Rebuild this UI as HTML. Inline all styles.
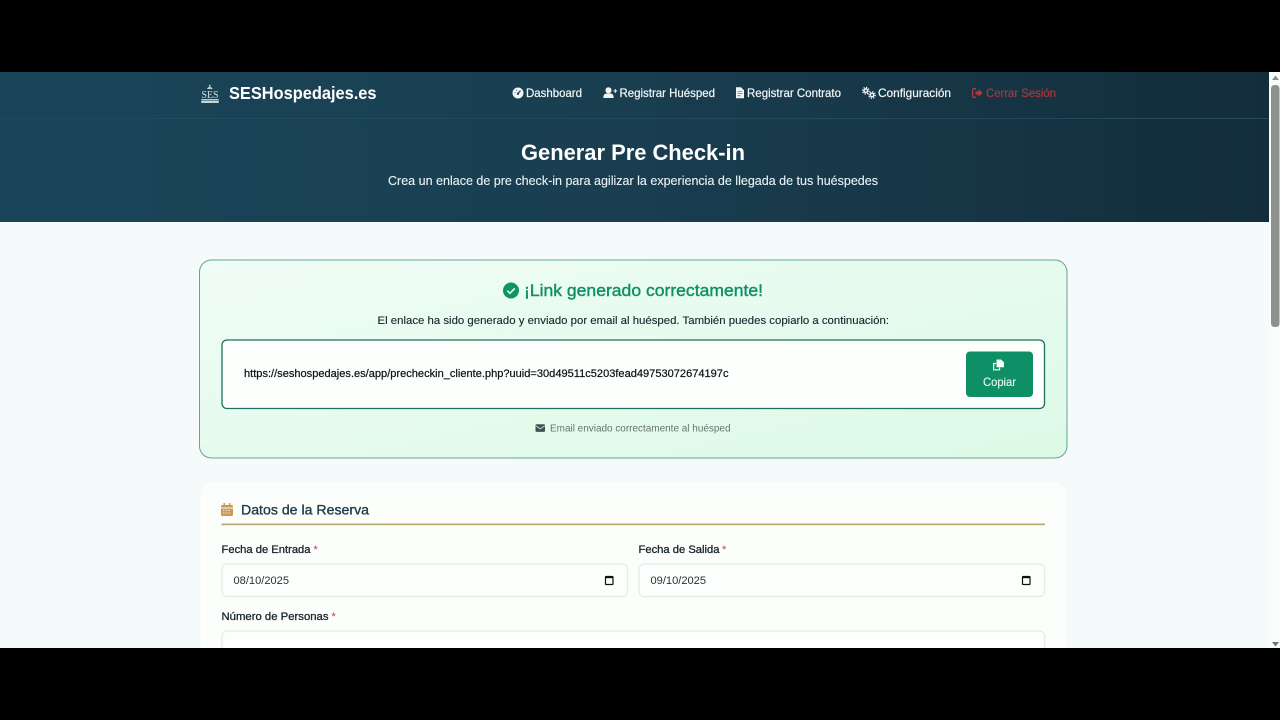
<!DOCTYPE html>
<html lang="es">
<head>
<meta charset="utf-8">
<title>Generar Pre Check-in</title>
<style>
html,body{margin:0;padding:0;width:1280px;height:720px;overflow:hidden;background:#000}
svg{display:block;position:absolute;left:0;top:0}
text{font-family:"Liberation Sans",Arial,sans-serif}
.m{stroke-width:.22px;paint-order:stroke}
</style>
</head>
<body>
<svg width="1280" height="720" viewBox="0 0 1280 720" xmlns="http://www.w3.org/2000/svg">
<defs>
<linearGradient id="hero" x1="0" y1="0" x2="1" y2="0">
<stop offset="0" stop-color="#1a4559"/>
<stop offset=".5" stop-color="#193e50"/>
<stop offset="1" stop-color="#132d3b"/>
</linearGradient>
<linearGradient id="alert" x1="0" y1="0" x2="1" y2="1">
<stop offset="0" stop-color="#f0fcf6"/>
<stop offset="1" stop-color="#dcfae6"/>
</linearGradient>
<clipPath id="page"><rect x="0" y="72" width="1280" height="576"/></clipPath>
</defs>

<rect width="1280" height="720" fill="#000"/>
<g clip-path="url(#page)">
<rect x="0" y="72" width="1269" height="576" fill="#f5fbfb"/>
<rect x="0" y="72" width="1269" height="150" fill="url(#hero)"/>
<rect x="0" y="118" width="1269" height="1" fill="#234a5c"/>

<!-- Logo -->
<g fill="#dfe7ea">
<path d="M207 88.300q2.800-2.600 5.600 0l-.5.6h-4.600z"/>
<rect x="209.200" y="84.800" width="1.200" height="2"/>
<rect x="201.300" y="99" width="17.400" height=".8"/>
<rect x="201.300" y="100.500" width="17.400" height="2.500" fill="#c9d4d8"/>
</g>
<text x="201.500" y="98" font-size="11" fill="#d5dfe3" textLength="17" lengthAdjust="spacingAndGlyphs" style="font-family:'Liberation Serif',serif">SES</text>
<text x="229" y="99" font-size="17.500" font-weight="700" fill="#fff" textLength="147.500" lengthAdjust="spacingAndGlyphs">SESHospedajes.es</text>

<!-- Nav -->
<circle cx="518" cy="93" r="5.500" fill="#f2f5f6"/>
<path d="M518 93.500l2.500-3" stroke="#1b4356" stroke-width="1.200" fill="none"/>
<circle cx="518" cy="93.800" r="1.200" fill="#1b4356"/>
<path d="M514.500 92.500h1M516.500 89.800v1" stroke="#1b4356" stroke-width=".8"/>
<text x="526" y="97" font-size="12" fill="#f2f5f6" class="m" stroke="#f2f5f6" textLength="56" lengthAdjust="spacingAndGlyphs">Dashboard</text>

<g fill="#f2f5f6">
<circle cx="608.500" cy="90.300" r="3.100"/>
<path d="M603.300 98q0-4.500 3.300-4.500h3.800q3.300 0 3.300 4.500z"/>
<path d="M613.500 90.500h1.300v-1.500h1v1.500h1.500v1h-1.500v1.500h-1v-1.500h-1.300z"/>
</g>
<text x="619.500" y="97" font-size="12" fill="#f2f5f6" class="m" stroke="#f2f5f6" textLength="95.500" lengthAdjust="spacingAndGlyphs">Registrar Huésped</text>

<path d="M736 87.200h5l3 3v8h-8z" fill="#f2f5f6"/>
<path d="M737.500 91.500h4.500M737.500 93.500h5M737.500 95.800h3" stroke="#1a3f51" stroke-width=".6"/>
<text x="747" y="97" font-size="12" fill="#f2f5f6" class="m" stroke="#f2f5f6" textLength="94" lengthAdjust="spacingAndGlyphs">Registrar Contrato</text>

<g fill="none" stroke="#f2f5f6">
<circle cx="865.800" cy="90.700" r="1.800" stroke-width="1.500"/>
<circle cx="865.800" cy="90.700" r="3.300" stroke-width="1.200" stroke-dasharray="1.300 1.300"/>
<circle cx="872" cy="95" r="1.800" stroke-width="1.500"/>
<circle cx="872" cy="95" r="3.300" stroke-width="1.200" stroke-dasharray="1.300 1.300"/>
</g>
<text x="878" y="97" font-size="12" fill="#f2f5f6" class="m" stroke="#f2f5f6" textLength="73" lengthAdjust="spacingAndGlyphs">Configuración</text>

<path d="M976 88.700h-2q-1.300 0-1.300 1.300v6q0 1.300 1.300 1.300h2" fill="none" stroke="#b9373d" stroke-width="1.300"/>
<path d="M975.500 91.500h3v-2.500l4 4-4 4v-2.500h-3z" fill="#b9373d"/>
<text x="986" y="97" font-size="12" fill="#a9363c" class="m" stroke="#a9363c" textLength="70" lengthAdjust="spacingAndGlyphs">Cerrar Sesión</text>

<!-- Hero -->
<text x="521" y="160" font-size="22.500" font-weight="700" fill="#fff" textLength="224" lengthAdjust="spacingAndGlyphs">Generar Pre Check-in</text>
<text x="388" y="185" font-size="12.600" fill="#e8f2f5" class="m" stroke="#e8f2f5" style="stroke-width:.12px" textLength="490" lengthAdjust="spacingAndGlyphs">Crea un enlace de pre check-in para agilizar la experiencia de llegada de tus huéspedes</text>

<!-- Alert card -->
<rect x="199.500" y="260" width="867.500" height="198" rx="12" fill="url(#alert)" stroke="#68a394" stroke-width="1"/>
<circle cx="511" cy="290.500" r="8" fill="#0f946a"/>
<path d="M507.300 290.700l2.600 2.600 4.800-4.900" fill="none" stroke="#e9fbf2" stroke-width="1.600"/>
<text x="524" y="296" font-size="17" fill="#0f8f67" class="m" stroke="#0f8f67" style="stroke-width:.4px" textLength="239" lengthAdjust="spacingAndGlyphs">¡Link generado correctamente!</text>
<text x="377.500" y="324" font-size="11.300" fill="#17232b" class="m" stroke="#17232b" style="stroke-width:.12px" textLength="511.500" lengthAdjust="spacingAndGlyphs">El enlace ha sido generado y enviado por email al huésped. También puedes copiarlo a continuación:</text>

<rect x="222" y="340" width="822.500" height="68.500" rx="5" fill="#fdfffd" stroke="#1f6e5e" stroke-width="1.300"/>
<text x="244" y="377" font-size="11" fill="#0c1418" class="m" stroke="#0c1418" textLength="484.500" lengthAdjust="spacingAndGlyphs">https://seshospedajes.es/app/precheckin_cliente.php?uuid=30d49511c5203fead49753072674197c</text>

<rect x="966" y="351.500" width="67" height="45.500" rx="4" fill="#0f8f66"/>
<path d="M996 363.500h-2.400v6.300h6v-2.300" fill="none" stroke="#f2fbf7" stroke-width="1.200"/>
<path d="M996.500 359.500h4.500l3 2.800v5h-7.500z" fill="#f2fbf7"/>
<text x="983" y="386" font-size="11.600" fill="#f0faf6" class="m" stroke="#f0faf6" style="stroke-width:.1px" textLength="33" lengthAdjust="spacingAndGlyphs">Copiar</text>

<rect x="535.500" y="424.300" width="9.500" height="7.600" rx="1" fill="#3f5350"/>
<path d="M535.800 425.800l4.500 3 4.500-3" fill="none" stroke="#e6f9ee" stroke-width=".8"/>
<text x="550" y="431.500" font-size="10" fill="#65736f" textLength="180.500" lengthAdjust="spacingAndGlyphs">Email enviado correctamente al huésped</text>

<!-- Form card -->
<rect x="200" y="482" width="867" height="190" rx="12" fill="#fbfefb" stroke="#f3f8f8" stroke-width="1"/>
<g fill="#c79a55">
<path d="M221 506.500q0-1.500 1.500-1.500h9q1.500 0 1.500 1.500v1h-12z"/>
<rect x="223.500" y="503" width="1.500" height="3"/>
<rect x="229" y="503" width="1.500" height="3"/>
<path d="M221 508.500h12v6q0 1.500-1.500 1.500h-9q-1.500 0-1.500-1.500z"/>
</g>
<path d="M223 510.500h8M223 513h8" stroke="#f5e6cb" stroke-width=".9" stroke-dasharray="1.500 1.200"/>
<text x="241" y="514.500" font-size="14.200" fill="#1d3a4a" class="m" stroke="#1d3a4a" style="stroke-width:.35px" textLength="128" lengthAdjust="spacingAndGlyphs">Datos de la Reserva</text>
<rect x="221.500" y="523.500" width="823.500" height="1.700" fill="#bba86f"/>

<text x="221.500" y="553" font-size="11.300" fill="#17242c" class="m" stroke="#17242c" style="stroke-width:.3px" textLength="89" lengthAdjust="spacingAndGlyphs">Fecha de Entrada</text>
<text x="313.500" y="553" font-size="11" fill="#c4374d">*</text>
<text x="638.500" y="553" font-size="11.300" fill="#17242c" class="m" stroke="#17242c" style="stroke-width:.3px" textLength="81" lengthAdjust="spacingAndGlyphs">Fecha de Salida</text>
<text x="722" y="553" font-size="11" fill="#c4374d">*</text>

<rect x="222" y="564" width="405.500" height="32.500" rx="5" fill="#fcfffc" stroke="#e3ebe9" stroke-width="1.200"/>
<text x="233.500" y="584" font-size="11.300" fill="#2a3238" textLength="55.500" lengthAdjust="spacingAndGlyphs">08/10/2025</text>
<rect x="605.500" y="576.500" width="7.500" height="8" rx=".8" fill="none" stroke="#111" stroke-width="1.200"/>
<rect x="605.500" y="576" width="7.500" height="2.200" fill="#111"/>

<rect x="639" y="564" width="405.500" height="32.500" rx="5" fill="#fcfffc" stroke="#e3ebe9" stroke-width="1.200"/>
<text x="650.500" y="584" font-size="11.300" fill="#2a3238" textLength="55.500" lengthAdjust="spacingAndGlyphs">09/10/2025</text>
<rect x="1022.500" y="576.500" width="7.500" height="8" rx=".8" fill="none" stroke="#111" stroke-width="1.200"/>
<rect x="1022.500" y="576" width="7.500" height="2.200" fill="#111"/>

<text x="221.500" y="620" font-size="11.300" fill="#17242c" class="m" stroke="#17242c" style="stroke-width:.3px" textLength="107" lengthAdjust="spacingAndGlyphs">Número de Personas</text>
<text x="331.500" y="620" font-size="11" fill="#c4374d">*</text>
<rect x="222" y="631" width="822.500" height="40" rx="5" fill="#fcfffc" stroke="#e3ebe9" stroke-width="1.200"/>

<!-- Scrollbar -->
<rect x="1269" y="72" width="11" height="576" fill="#fafcfb"/>
<path d="M1272 80l3.500-4.500 3.500 4.500z" fill="#8b8f8c"/>
<rect x="1271" y="85" width="8.500" height="242" rx="3.500" fill="#8e928f"/>
<path d="M1272 642l3.500 4.500 3.500-4.500z" fill="#6f7371"/>
</g>
</svg>
</body>
</html>
